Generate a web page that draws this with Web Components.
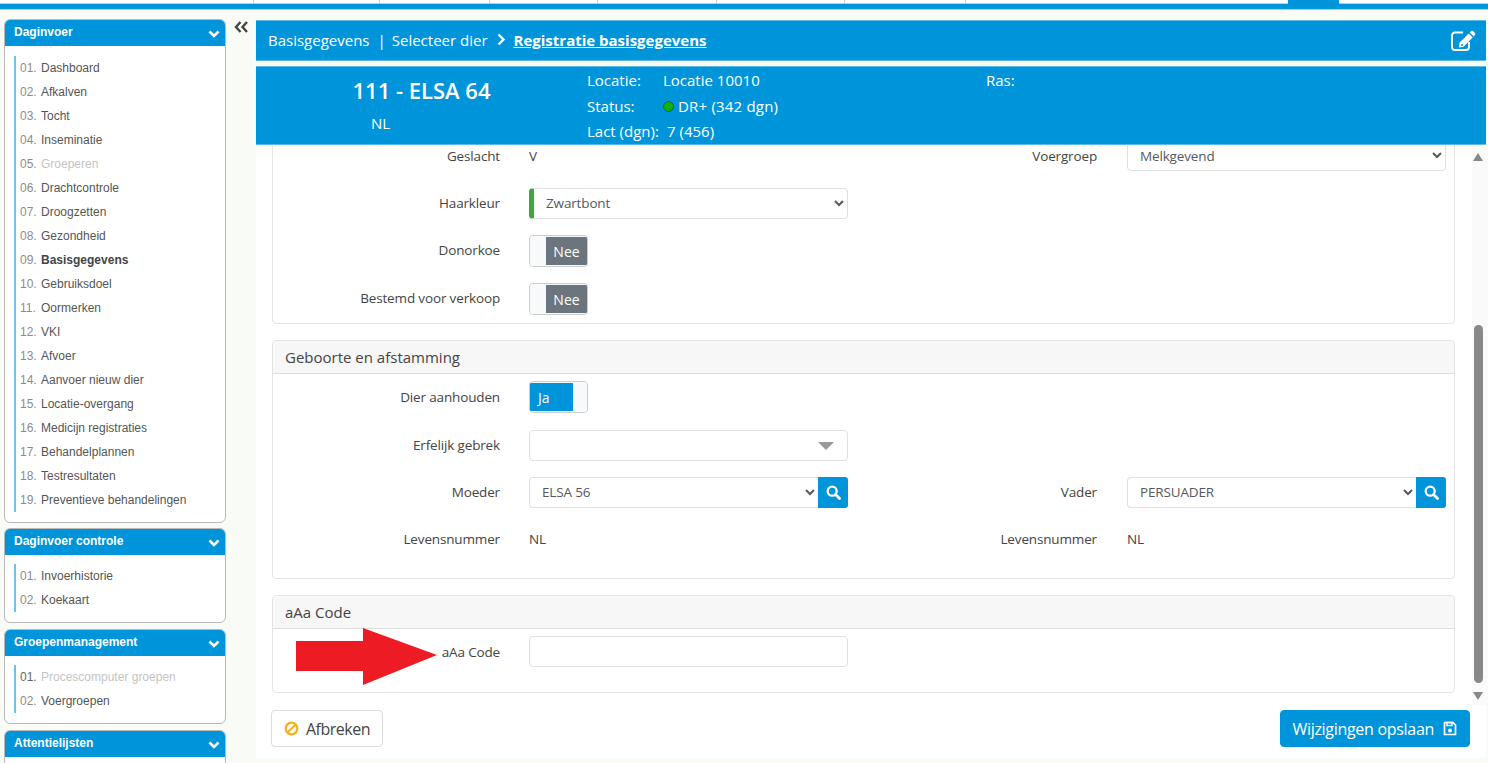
<!DOCTYPE html>
<html lang="nl"><head><meta charset="utf-8"><title>Basisgegevens</title>
<style>
html,body{margin:0;height:763px;overflow:hidden;background:#f9fbf7}
body{font-family:"Open Sans","Noto Sans",sans-serif;font-size:14px;color:#444}
</style></head><body>
<app-shell>
  <top-strip slot="top"></top-strip>
  <side-bar slot="side">
    <side-panel title="Daginvoer">
      <side-item num="01.">Dashboard</side-item><side-item num="02.">Afkalven</side-item><side-item num="03.">Tocht</side-item><side-item num="04.">Inseminatie</side-item><side-item num="05." state="off">Groeperen</side-item><side-item num="06.">Drachtcontrole</side-item><side-item num="07.">Droogzetten</side-item><side-item num="08.">Gezondheid</side-item><side-item num="09." state="on">Basisgegevens</side-item><side-item num="10.">Gebruiksdoel</side-item><side-item num="11.">Oormerken</side-item><side-item num="12.">VKI</side-item><side-item num="13.">Afvoer</side-item><side-item num="14.">Aanvoer nieuw dier</side-item><side-item num="15.">Locatie-overgang</side-item><side-item num="16.">Medicijn registraties</side-item><side-item num="17.">Behandelplannen</side-item><side-item num="18.">Testresultaten</side-item><side-item num="19.">Preventieve behandelingen</side-item>
    </side-panel>
    <side-panel title="Daginvoer controle" tight><side-item num="01.">Invoerhistorie</side-item><side-item num="02.">Koekaart</side-item></side-panel>
    <side-panel title="Groepenmanagement" tight style="margin-top:1px"><side-item num="01." state="off" dark>Procescomputer groepen</side-item><side-item num="02.">Voergroepen</side-item></side-panel>
    <side-panel title="Attentielijsten" empty style="margin-top:1px"></side-panel>
  </side-bar>
  <collapse-btn slot="gutter"></collapse-btn>
  <main-pane slot="main">
    <crumb-bar slot="crumb"></crumb-bar>
    <animal-info slot="info"></animal-info>
    <form-card plain>
      <form-row label="Geslacht" label2="Voergroep" low><plain-value slot="c1">V</plain-value><form-select slot="c2" value="Melkgevend"></form-select></form-row>
      <form-row label="Haarkleur"><form-select slot="c1" value="Zwartbont" mark></form-select></form-row>
      <form-row label="Donorkoe" high><on-off slot="c1"></on-off></form-row>
      <form-row label="Bestemd voor verkoop" high><on-off slot="c1"></on-off></form-row>
    </form-card>
    <form-card title="Geboorte en afstamming" pad="22.5">
      <form-row label="Dier aanhouden"><on-off slot="c1" on></on-off></form-row>
      <form-row label="Erfelijk gebrek"><chosen-box slot="c1"></chosen-box></form-row>
      <form-row label="Moeder" label2="Vader"><form-select slot="c1" value="ELSA 56" search></form-select><form-select slot="c2" value="PERSUADER" search></form-select></form-row>
      <form-row label="Levensnummer" label2="Levensnummer" high><plain-value slot="c1">NL</plain-value><plain-value slot="c2">NL</plain-value></form-row>
    </form-card>
    <form-card title="aAa Code" pad="24">
      <form-row label="aAa Code"><text-box slot="c1"></text-box></form-row>
    </form-card>
    <red-arrow slot="over"></red-arrow>
    <act-btn slot="cancel">Afbreken</act-btn>
    <act-btn slot="save" primary>Wijzigingen opslaan</act-btn>
  </main-pane>
</app-shell>
<script>
const def=(name,html,extra={})=>{
  const t=document.createElement('template');t.innerHTML=html;
  customElements.define(name,class extends HTMLElement{
    constructor(){super();this.attachShadow({mode:'open'}).appendChild(t.content.cloneNode(true));}
    connectedCallback(){if(extra.init)extra.init.call(this,this.shadowRoot);}
  });
};
const BLUE='#0095da';
def('app-shell',`<style>
:host{display:block;height:763px;overflow:hidden}
.row{display:flex;align-items:flex-start}
.s{width:222px;margin:9px 0 0 4px;flex:none}
.g{width:30px;flex:none}
.m{width:1230px;flex:none;margin-top:10px}
</style><slot name="top"></slot><div class="row"><div class="s"><slot name="side"></slot></div><div class="g"><slot name="gutter"></slot></div><div class="m"><slot name="main"></slot></div></div>`);
def('top-strip',`<style>
:host{display:block;height:10px;background:${BLUE};box-sizing:border-box}
.t{display:flex;height:3px;background:#fff;border-bottom:1px solid #9fd3ee;box-sizing:content-box}
.t i{display:block;height:3px;border-right:1px solid #ccc;box-sizing:border-box}
.t b{display:block;height:4px;width:51px;background:${BLUE}}
.e{height:1px;background:#9fd8f2;margin-top:5px}
</style><div class="t"><i style="width:254px"></i><i style="width:126px"></i><i style="width:110px"></i><i style="width:108px"></i><i style="width:119px"></i><i style="width:128px"></i><i style="width:121px"></i><i style="width:322px;border:0"></i><b></b></div><div class="e"></div>`);
def('side-bar',`<style>:host{display:flex;flex-direction:column;gap:5px}</style><slot></slot>`);
def('side-panel',`<style>
:host{display:block;border:1px solid #b9b9b9;border-radius:6px;background:#fff;overflow:hidden;font-family:"Liberation Sans",Arial,sans-serif}
.h{height:26px;background:${BLUE};color:#fff;font-weight:700;font-size:12px;display:flex;align-items:center;justify-content:space-between;padding:0 5px 2px 9px;box-sizing:border-box}
svg{display:block;margin-top:3px}
.b{margin:10px 0 10px 9px;border-left:2px solid #66c4f2;padding-left:4px}
:host([tight]) .b{margin-top:9px}
:host([empty]) .b{border:0;height:40px;margin-bottom:0}
</style><div class="h"><span id="t"></span><svg width="12" height="8" viewBox="0 0 12 8"><path d="M1.500 1.500 6 6l4.500-4.500" fill="none" stroke="#fff" stroke-width="2.600"/></svg></div><div class="b"><slot></slot></div>`,{init(r){r.getElementById('t').textContent=this.getAttribute('title');this.removeAttribute('title')}});
def('side-item',`<style>
:host{display:flex;height:24px;align-items:center;font-size:12px;color:#555}
.n{width:21px;flex:none;color:#8c8c8c}
:host([dark]) .n{color:#666}
:host([state=off]) .x{color:#c4c4c4}
:host([state=on]) .x{font-weight:700;color:#444}
</style><span class="n" id="n"></span><span class="x"><slot></slot></span>`,{init(r){r.getElementById('n').textContent=this.getAttribute('num')}});
def('collapse-btn',`<style>:host{display:block;padding:11px 0 0 8px}svg{display:block}</style><svg width="15" height="12" viewBox="0 0 15 12"><path d="M6.500 1 2 6l4.500 5M13 1 8.500 6l4.500 5" fill="none" stroke="#444" stroke-width="2.400"/></svg>`);
def('main-pane',`<style>
:host{display:block;width:1230px}
.w{position:relative;display:flex;height:560px;background:#fff}
.sc{flex:1;overflow:hidden;display:flex;flex-direction:column;justify-content:flex-end;gap:16px;padding:0 17px 12px 16px}
.bar{width:14px;flex:none;background:#fafafa;display:flex;flex-direction:column;align-items:center;padding:8px 0 5px;box-sizing:border-box}
.up,.dn{width:0;height:0;border:5.500px solid transparent;border-top:0;border-bottom:8px solid #888;margin-left:-2px}
.dn{border-bottom:0;border-top:8px solid #888}
.th{width:9px;height:358px;border-radius:5px;background:#888;margin:auto 0 9px -2px}
.f{height:53px;background:#fff;display:flex;justify-content:space-between;padding:5px 16px 0 15px;box-sizing:border-box}
</style><slot name="crumb"></slot><slot name="info"></slot><div class="w"><div class="sc"><slot></slot></div><div class="bar"><div class="up"></div><div class="th"></div><div class="dn"></div></div><slot name="over"></slot></div><div class="f"><slot name="cancel"></slot><slot name="save"></slot></div>`);
def('crumb-bar',`<style>
:host{display:flex;height:41px;background:${BLUE};color:#fff;font-size:15px;align-items:center;padding:0 10px 2px 12px;margin-bottom:5px;box-sizing:border-box;border:solid #5cbce8;border-width:1px 0}
.sep{margin:0 0 0 8px}.a{margin-left:6px}
svg.c{margin:0 8px 0 9px;display:block}
b{font-weight:700;text-decoration:underline;font-size:15px}
.ed{margin:2px 0 0 auto;display:block}
</style><span>Basisgegevens</span><span class="sep">|</span><span class="a">Selecteer dier</span><svg class="c" width="9" height="13" viewBox="0 0 9 13"><path d="M1.500 1.500 6.500 6.500l-5 5" fill="none" stroke="#fff" stroke-width="2.400"/></svg><b>Registratie basisgegevens</b>
<svg class="ed" width="26" height="21" viewBox="0 0 26 21"><path d="M13 2.500H5a3 3 0 0 0-3 3V17a3 3 0 0 0 3 3h11a3 3 0 0 0 3-3v-5" fill="none" stroke="#fff" stroke-width="1.900"/><path fill="#fff" fill-rule="evenodd" d="M9.500 12.800 18.700 3.600l4 4-9.200 9.200-4.500.700zM12 14a1 1 0 1 0 .01 0z"/><path fill="#fff" d="M19.800 2.500 21.200 1.100a1.300 1.300 0 0 1 1.800 0l2 2a1.300 1.300 0 0 1 0 1.800L23.700 6.400z"/></svg>`);
def('animal-info',`<style>
:host{display:grid;grid-template-columns:331px 399px 1fr;height:79px;background:${BLUE};color:#fff;font-size:15px;box-sizing:border-box;border:solid #5cbce8;border-width:1px 0}
.id{display:flex;flex-direction:column}
.nm{font-size:22px;font-weight:600;text-align:center;line-height:30px;margin-top:8px}
.nl{line-height:20px;margin:8px 0 0 115px}
.g{display:grid;grid-template-columns:76px 1fr;grid-auto-rows:25.500px;padding-top:1px;line-height:25.500px}
.d{display:inline-block;width:9px;height:9px;border-radius:50%;background:#10b010;border:1px solid #063;margin-right:4px}
.st{letter-spacing:.2px}
.ras{padding-top:1px;line-height:25.500px}
.v7{padding-left:4px}
</style><div class="id"><div class="nm">111 - ELSA 64</div><div class="nl">NL</div></div><div class="g"><span>Locatie:</span><span>Locatie 10010</span><span>Status:</span><span class="st"><span class="d"></span>DR+ (342 dgn)</span><span>Lact (dgn):</span><span class="v7">7 (456)</span></div><div class="ras">Ras:</div>`);
def('form-card',`<style>
:host{display:block;flex:none;border:1px solid #e4e4e4;border-radius:4px;background:#fff}
.h{height:33px;background:#f7f7f7;border-bottom:1px solid #dfdfdf;box-sizing:border-box;padding:0 12px;line-height:33px;font-size:15px;color:#444;border-radius:4px 4px 0 0}
:host([plain]) .h{display:none}
.b{display:flex;flex-direction:column;gap:15.500px;padding:7px 0 8px}
:host([plain]) .b{gap:16px}
</style><div class="h" id="t"></div><div class="b" id="b"><slot></slot></div>`,{init(r){r.getElementById('t').textContent=this.getAttribute('title')||'';this.removeAttribute('title');const p=this.getAttribute('pad');if(p)r.getElementById('b').style.paddingBottom=p+'px'}});
def('form-row',`<style>
:host{display:grid;grid-template-columns:227px 29px 319px 249px 30px 319px;height:32px;align-items:start;font-size:13.500px;letter-spacing:-.15px}
.l{text-align:right;color:#444;line-height:32px}
:host([low]) .l:not(:empty){padding-top:1px}
:host([low]) ::slotted(plain-value){padding-top:1px}
:host([high]) .l{line-height:30px}
:host([high]) ::slotted(plain-value){line-height:30px}
.c1{grid-column:3}.l2{grid-column:4}.c2{grid-column:6}
</style><div class="l" id="a"></div><div class="c1"><slot name="c1"></slot></div><div class="l l2" id="b"></div><div class="c2"><slot name="c2"></slot></div>`,{init(r){r.getElementById('a').textContent=this.getAttribute('label')||'';r.getElementById('b').textContent=this.getAttribute('label2')||''}});
def('plain-value',`<style>:host{display:block;color:#444;line-height:32px}</style><slot></slot>`);
def('form-select',`<style>
:host{display:flex;height:31px;margin-top:1px}
select{flex:1;min-width:0;height:31px;font:inherit;letter-spacing:inherit;color:#55595f;background:#fff;border:1px solid #dde1e6;border-radius:4px;padding:0 4px 0 8px;outline:0}
:host([mark]) select{border-left:5px solid #3aa83a;padding-left:8px;padding-bottom:2px}
:host([search]) select{border-radius:4px 0 0 4px;border-right:0;padding-bottom:2px}
button{display:none;width:30px;flex:none;border:0;background:${BLUE};padding:0;border-radius:0 3px 3px 0;align-items:center;justify-content:center}
:host([search]) button{display:flex}
</style><select><option id="o"></option></select><button aria-label="Zoeken"><svg width="15" height="15" viewBox="0 0 15 15"><circle cx="6.200" cy="6.200" r="4.500" fill="none" stroke="#fff" stroke-width="2.300"/><path d="M9.600 9.600 13.500 13.500" stroke="#fff" stroke-width="2.800" stroke-linecap="round"/></svg></button>`,{init(r){r.getElementById('o').textContent=this.getAttribute('value')}});
def('on-off',`<style>
:host{display:flex;width:59px;height:32px;box-sizing:border-box;border:1px solid #ccc;border-radius:4px;overflow:hidden;background:#f8f9fa;font-size:14px;letter-spacing:0;color:#fff}
.h{width:16px;flex:none;background:#f8f9fa}
:host([on]) .h{width:14px}
.l{flex:1;background:#6c757d;display:flex;align-items:center;justify-content:center;padding-top:1px;margin:1px 0}
:host([on]) .l{background:${BLUE};justify-content:flex-start;padding-left:8px}
:host([on]){flex-direction:row-reverse}
</style><div class="h"></div><div class="l" id="l"></div>`,{init(r){r.getElementById('l').textContent=this.hasAttribute('on')?'Ja':'Nee'}});
def('chosen-box',`<style>
:host{display:flex;height:31px;margin-top:1px;box-sizing:border-box;border:1px solid #dde1e6;border-radius:4px;background:#fff;align-items:center;justify-content:flex-end;padding:2px 13px 0 0}
i{width:0;height:0;border:8px solid transparent;border-bottom:0;border-top:8px solid #999}
</style><i></i>`);
def('text-box',`<style>:host{display:block}input{display:block;width:100%;height:31px;box-sizing:border-box;border:1px solid #dde1e6;border-radius:4px;background:#fff;outline:0;font:inherit}</style><input type="text" aria-label="aAa Code">`);
def('red-arrow',`<style>:host{position:absolute;left:40px;bottom:19px;width:142px;height:58px}svg{display:block}</style><svg width="142" height="58" viewBox="0 0 142 58"><path d="M0 13H67V0L141 27 67 57V43H0Z" fill="#ed1c24"/></svg>`);
def('act-btn',`<style>
:host{display:flex;height:37px;box-sizing:border-box;align-items:center;border:1px solid #ddd;border-radius:4px;background:#fff;color:#444;font-size:16px;letter-spacing:-.5px;padding:0 12px;gap:7px}
:host([primary]){background:${BLUE};border-color:${BLUE};color:#fff;flex-direction:row-reverse;gap:9px;letter-spacing:-.3px;padding:0 12px 0 11px}
svg{display:none}
:host(:not([primary])) .ban{display:block}
:host([primary]) .sv{display:block}
</style><svg class="ban" width="15" height="15" viewBox="0 0 15 15"><circle cx="7.500" cy="7.500" r="5.800" fill="none" stroke="#f5b021" stroke-width="2.200"/><path d="M3.500 11.500 11.500 3.500" stroke="#f5b021" stroke-width="2.200"/></svg><svg class="sv" width="14" height="15" viewBox="0 0 14 15"><path d="M1.500 1.500h8.500l2.500 2.500v9.500h-11z" fill="none" stroke="#fff" stroke-width="1.700" stroke-linejoin="round"/><path d="M4 1.500h5v3H4z" fill="none" stroke="#fff" stroke-width="1.400"/><circle cx="7" cy="9.500" r="2" fill="#fff"/></svg><span><slot></slot></span>`);
</script>
</body></html>
